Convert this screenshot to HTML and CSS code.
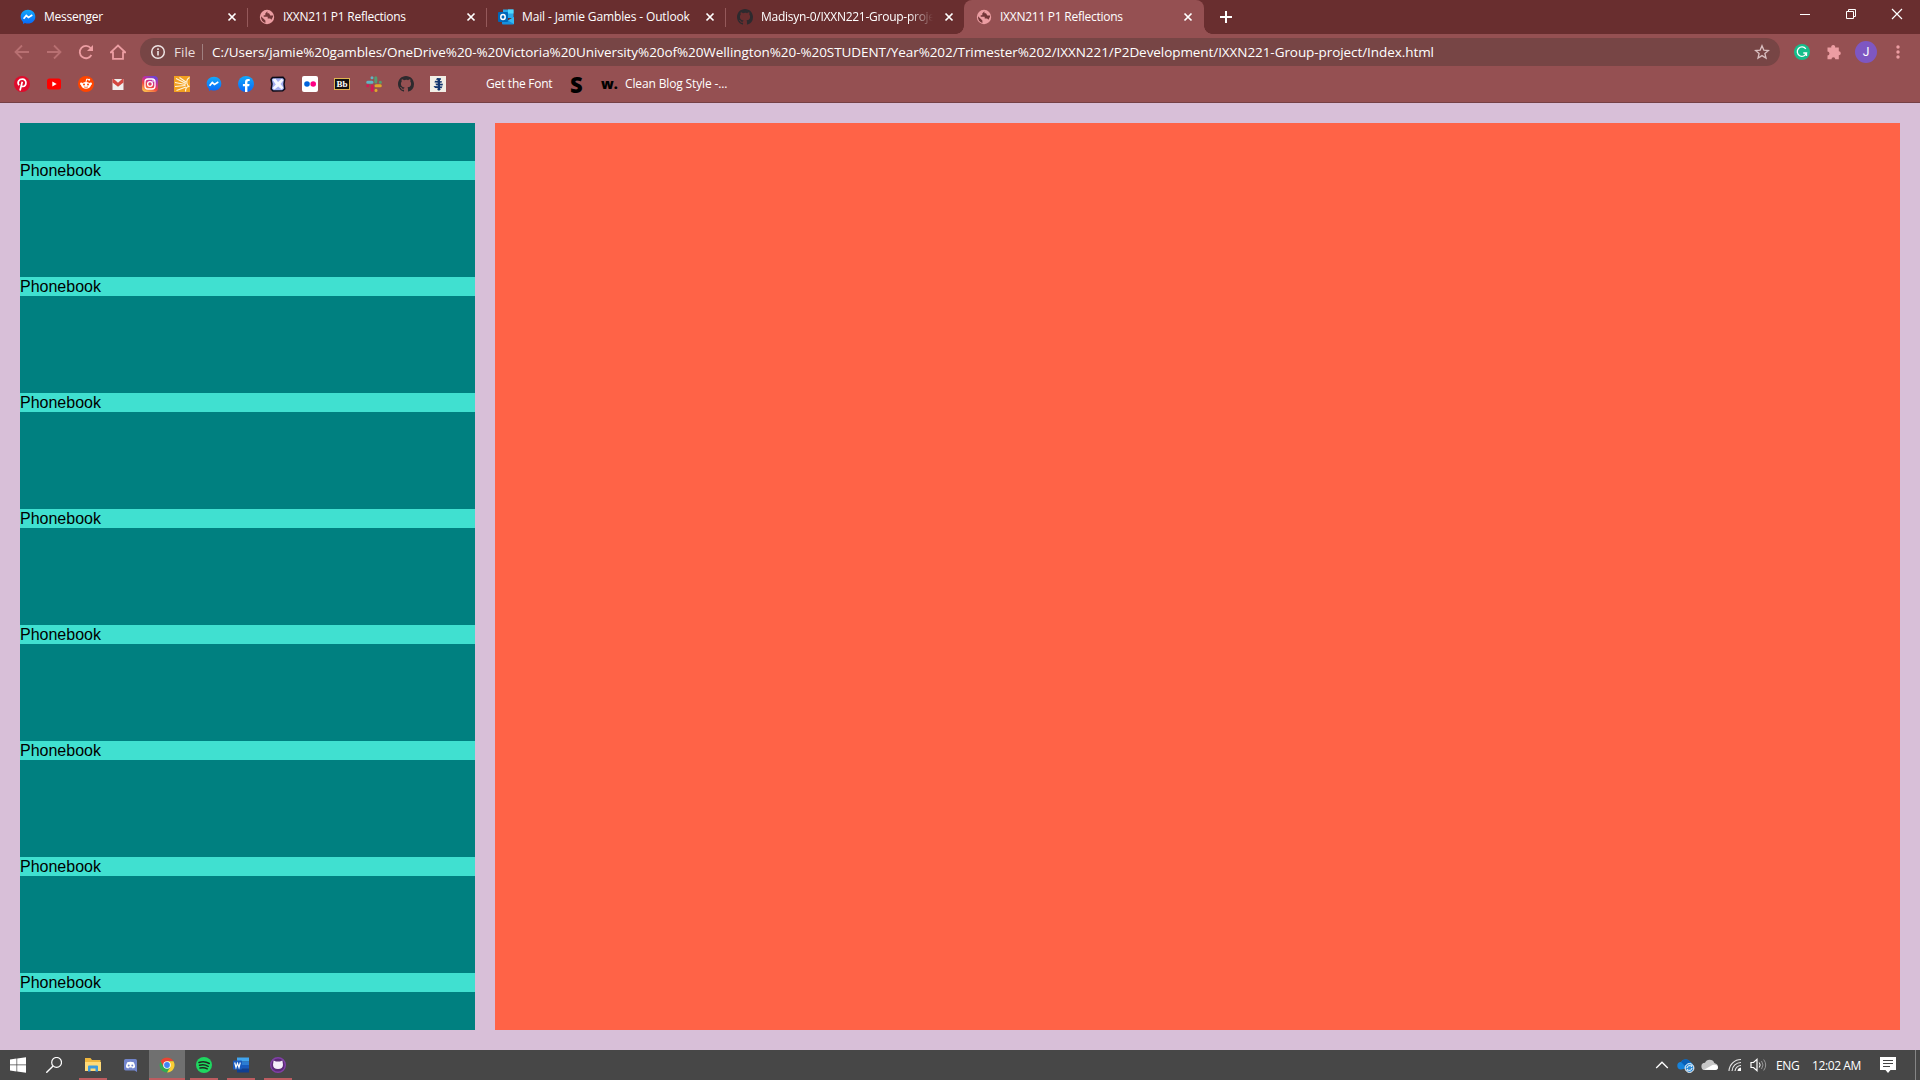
FILE: index.html
```html
<!DOCTYPE html>
<html lang="en">
<head>
<meta charset="utf-8">
<title>IXXN211 P1 Reflections</title>
<link rel="stylesheet" href="styles.css">
</head>
<body>
<svg class="defs" width="0" height="0" aria-hidden="true">
  <defs>
    <linearGradient id="blue" x1="0" y1="0" x2="0" y2="1"><stop offset="0" stop-color="#13a9fb"/><stop offset="1" stop-color="#0868f8"/></linearGradient>
    <linearGradient id="insta" x1="0.2" y1="1" x2="0.7" y2="0"><stop offset="0" stop-color="#ffc64c"/><stop offset=".4" stop-color="#f0453f"/><stop offset=".7" stop-color="#c52fa0"/><stop offset="1" stop-color="#6a45d8"/></linearGradient>
    <symbol id="close" viewBox="0 0 16 16"><path d="M4.5 4.5l7 7m0-7l-7 7" stroke="#fff" stroke-width="1.7" fill="none"/></symbol>
    <symbol id="messenger" viewBox="0 0 16 16"><path d="M8 .8C3.7.8.7 3.9.7 7.8c0 2.1.8 3.8 2.3 5.1v2l2-.9c.9.4 1.9.6 3 .6 4.300 0 7.300-2.900 7.300-6.800S12.300.8 8 .8z" fill="url(#blue)"/><path d="M3.600 9.800l2.700-3.300 2.200 1.900 3.800-2.300" fill="none" stroke="#fff" stroke-width="1.700"/></symbol>
    <symbol id="globe" viewBox="0 0 16 16"><circle cx="8" cy="8" r="7.200" fill="#ec9da2"/><path d="M8.400 2.200L6.300 4.500v1.700H4.700v1.500h4v1.800h2.500l1.200 1.300 1.600-3 .100-1.200h-2.800L10 4.200h-1.600zM2 7.300l4.400 4.200v2.400C3.600 13.300 1.800 10.800 2 7.300z" fill="#733638"/></symbol>
    <symbol id="github" viewBox="0 0 16 16"><path fill="#2d2a2e" d="M8 0C3.580 0 0 3.580 0 8c0 3.540 2.290 6.530 5.470 7.590.4.070.55-.17.55-.38 0-.19-.01-.82-.01-1.490-2.010.37-2.530-.49-2.690-.94-.09-.23-.48-.94-.82-1.130-.28-.15-.68-.52-.01-.53.63-.01 1.080.58 1.230.82.72 1.210 1.870.87 2.330.66.07-.52.28-.87.51-1.070-1.780-.2-3.640-.89-3.640-3.950 0-.87.31-1.590.82-2.150-.08-.2-.36-1.020.08-2.120 0 0 .67-.21 2.200.82A7.600 7.600 0 018 3.860c.68 0 1.360.09 2 .27 1.530-1.040 2.200-.82 2.200-.82.44 1.100.16 1.920.08 2.120.51.56.82 1.270.82 2.150 0 3.070-1.870 3.750-3.650 3.950.29.25.54.73.54 1.480 0 1.070-.01 1.930-.01 2.200 0 .21.15.46.55.38A8.010 8.010 0 0016 8c0-4.420-3.580-8-8-8z"/></symbol>
  </defs>
</svg>

<header class="browser">
  <div class="tabstrip">
    <div class="tab"><svg class="ico"><use href="#messenger"/></svg><span class="tab-title">Messenger</span><svg class="ico"><use href="#close"/></svg></div>
    <div class="tab divided"><svg class="ico"><use href="#globe"/></svg><span class="tab-title">IXXN211 P1 Reflections</span><svg class="ico"><use href="#close"/></svg></div>
    <div class="tab divided"><svg class="ico" viewBox="0 0 16 16"><path d="M5 .5h10.500V9H5z" fill="#28a8ea"/><path d="M10 .5h5.500v4H10z" fill="#50d9ff"/><path d="M5 4.500h5V9H5z" fill="#0364b8"/><path d="M4 9l6 2.500L16 8v6.500q0 1-1 1H5q-1 0-1-1z" fill="#1490df"/><path d="M10 11.500L16 8v7z" fill="#35b8f1"/><rect y="3" width="10" height="10" rx="1" fill="#0067b8"/><ellipse cx="5" cy="8" rx="2.200" ry="2.500" fill="none" stroke="#fff" stroke-width="1.500"/></svg><span class="tab-title wide">Mail - Jamie Gambles - Outlook</span><svg class="ico"><use href="#close"/></svg></div>
    <div class="tab divided"><svg class="ico"><use href="#github"/></svg><span class="tab-title fade">Madisyn-0/IXXN221-Group-proje</span><svg class="ico"><use href="#close"/></svg></div>
    <div class="tab active"><svg class="ico"><use href="#globe"/></svg><span class="tab-title">IXXN211 P1 Reflections</span><svg class="ico"><use href="#close"/></svg></div>
    <svg class="newtab" viewBox="0 0 16 16"><path d="M8 2v12M2 8h12" stroke="#fff" stroke-width="2"/></svg>
    <div class="window-controls">
      <svg viewBox="0 0 46 28"><path d="M18 14.500h10" stroke="#fff"/></svg>
      <svg viewBox="0 0 46 28"><path d="M18.500 11.500h7v7h-7zM20.500 11.500v-2h7v7h-2" stroke="#fff" fill="none"/></svg>
      <svg viewBox="0 0 46 28"><path d="M18 9l10 10M28 9L18 19" stroke="#fff" stroke-width="1.200"/></svg>
    </div>
  </div>

  <div class="toolbar">
    <div class="nav">
      <svg class="ico dim" viewBox="0 0 16 16"><path d="M15 8H2M8 1.500L1.500 8 8 14.500" /></svg>
      <svg class="ico dim" viewBox="0 0 16 16"><path d="M1 8h13M8 1.500L14.500 8 8 14.500"/></svg>
      <svg class="ico" viewBox="0 0 16 16"><path d="M13.400 11A6.200 6.200 0 1 1 12.700 4"/><path d="M15 1v6H9z" fill="#ec9da2" stroke="none"/></svg>
      <svg class="ico" viewBox="0 0 16 16"><path d="M.7 8.300L8 1.500l7.300 6.800H13v6.500H3V8.300z"/></svg>
    </div>
    <div class="omnibox">
      <svg class="ico" viewBox="0 0 16 16"><circle cx="8" cy="8" r="6.300" fill="none" stroke="#eee4e4" stroke-width="1.500"/><path d="M8 7v4.500M8 4.300v1.600" stroke="#eee4e4" stroke-width="1.600"/></svg>
      <span class="scheme">File</span>
      <span class="url">C:/Users/jamie%20gambles/OneDrive%20-%20Victoria%20University%20of%20Wellington%20-%20STUDENT/Year%202/Trimester%202/IXXN221/P2Development/IXXN221-Group-project/Index.html</span>
      <svg class="ico star" viewBox="0 0 16 16"><path d="M8 1.800l1.800 4.300 4.700.4-3.600 3 1.100 4.600L8 11.600l-4 2.500 1.100-4.600-3.600-3 4.700-.4z" fill="none" stroke="#d9bfc0" stroke-width="1.300"/></svg>
    </div>
    <div class="extensions">
      <svg class="ico" viewBox="0 0 16 16"><circle cx="8" cy="8" r="8" fill="#15bd8b"/><path d="M11.800 4.900A4.700 4.700 0 1 0 12.500 9H9.300m3.200 0v3" fill="none" stroke="#fff" stroke-width="1.300"/></svg>
      <svg class="ico" viewBox="0 0 16 16"><path d="M1.500 3.500h3.800a2 2 0 1 1 3.800 0h3.700v3.700a2 2 0 1 1 0 4v4H9.300a1.900 1.900 0 0 0-3.800 0h-4v-3.800a1.900 1.900 0 0 0 0-3.900z" fill="#ec9da2"/></svg>
      <span class="avatar">J</span>
      <svg class="ico" viewBox="0 0 16 16" fill="#ec9da2"><circle cx="8" cy="3" r="1.700"/><circle cx="8" cy="8" r="1.700"/><circle cx="8" cy="13" r="1.700"/></svg>
    </div>
  </div>

  <div class="bookmarks">
    <div class="bookmark-icons">
      <svg class="ico" viewBox="0 0 16 16"><circle cx="8" cy="8" r="8" fill="#e00b2c"/><path d="M5 9.300C2.700 6 5.200 3.200 8.300 3.200c5.200 0 4.300 7.300.6 7.300-1 0-1.500-.8-1.500-.8M8.300 5.700L6 14.500" fill="none" stroke="#fff" stroke-width="1.700"/></svg>
      <svg class="ico" viewBox="0 0 16 16"><rect x="1" y="2.500" width="14" height="11" rx="2.500" fill="#f00"/><path d="M6.300 5.500v5L10.700 8z" fill="#fff"/></svg>
      <svg class="ico" viewBox="0 0 16 16"><circle cx="8" cy="8" r="8" fill="#ff4500"/><ellipse cx="8" cy="9.300" rx="4.800" ry="3.400" fill="#fff"/><circle cx="3.300" cy="7.800" r="1.300" fill="#fff"/><circle cx="12.700" cy="7.800" r="1.300" fill="#fff"/><path d="M8 6l.7-3 2.400.6" fill="none" stroke="#fff"/><circle cx="11.200" cy="3.700" r="1" fill="#fff"/><circle cx="6" cy="8.600" r="1" fill="#ff4500"/><circle cx="10" cy="8.600" r="1" fill="#ff4500"/><path d="M6 10.900q2 1 4 0" stroke="#ff4500" stroke-width=".7" fill="none"/></svg>
      <svg class="ico" viewBox="0 0 16 16"><path d="M3 3h10v11H3z" fill="#eee"/><path d="M2.500 14V3h1.300L8 6.800 12.200 3h1.300v11z" fill="#f2eeee"/><path d="M2.500 6.500V3h1.300L8 6.800 12.200 3h1.300v3.500L8 10.800z" fill="#d44640"/></svg>
      <svg class="ico" viewBox="0 0 16 16"><rect width="16" height="16" rx="4" fill="url(#insta)"/><rect x="3" y="3" width="10" height="10" rx="3" fill="none" stroke="#fff" stroke-width="1.300"/><circle cx="8" cy="8" r="2.400" fill="none" stroke="#fff" stroke-width="1.300"/><circle cx="11" cy="5" r=".8" fill="#fff"/></svg>
      <svg class="ico" viewBox="0 0 16 16"><path d="M0 0h16v16H0z" fill="#f2a021"/><path d="M12 6L5.500 1.500M12 7.500L2 2.500M11.500 8.500L1 6.500M11.500 9.500L1 10.500M12 11L2.500 14.500M15.500 1.500q-3.500 2-2.500 6 .5 2.500 2.500 3-4 0-4 5" stroke="#fff5df" stroke-width="1.100" fill="none"/></svg>
      <svg class="ico"><use href="#messenger"/></svg>
      <svg class="ico" viewBox="0 0 16 16"><circle cx="8" cy="8" r="8" fill="url(#blue)"/><path d="M7 16v-5.700H4.900V8H7V6.200q0-3.200 3-3.200l1.700.1v2h-1.100q-1.200 0-1.200 1.200V8h2.200l-.4 2.300H9.400V16z" fill="#fff"/></svg>
      <svg class="ico" viewBox="0 0 16 16"><path d="M2.500 1.500l10.500-.3 1.700 2-.7 4.800.7 5-2 1.800-9.700.2-1.800-2L2 8 1 3.500z" fill="#a3aef0" stroke="#0a0a18" stroke-width="1.500"/><path d="M2.500 3.500l3-.8L8 6l3.500-3.300 2 1.500L10.500 8l2.800 3.500-1.500 2L8.200 10.500 4.500 13.500l-2-1.500L5.800 8.500z" fill="#f5f7ff"/></svg>
      <svg class="ico" viewBox="0 0 16 16"><rect width="16" height="16" rx="2" fill="#fff"/><circle cx="5" cy="8" r="2.800" fill="#0063dc"/><circle cx="11.200" cy="8" r="2.800" fill="#ff0084"/></svg>
      <span class="bb">Bb</span>
      <svg class="ico" viewBox="0 0 16 16" stroke-width="3" stroke-linecap="round"><path d="M1.700 6.300H6M6 1.700v.1" stroke="#62b4c4"/><path d="M9.800 1.700V6M14.300 6.200h.1" stroke="#559b70"/><path d="M10 9.800h4.300M10 14.300v.1" stroke="#e2a62b"/><path d="M6.200 10v4.300M1.700 9.800h.1" stroke="#d31b55"/></svg>
      <svg class="ico"><use href="#github"/></svg>
      <svg class="ico" viewBox="0 0 16 16"><path d="M0 0h16v16H0z" fill="#f2efe6"/><path d="M7 2l4 .3-.3 1.700L6 3.700zM5 4.800l7 .4-.5 1.600-7-.3zM5.500 7.500l7.500.3-.5 1.700-6.500-.2zM3.500 10l9 .6-1 1.600-6.500-.3zM7 12.800l4 .2-1.500 1.600H8z" fill="#12366e"/><path d="M7.500 3h2.500v11H8z" fill="#12366e"/></svg>
    </div>
    <span class="bm-text font-link">Get the Font</span>
    <span class="bm-s">S</span>
    <span class="bm-w">w.</span>
    <span class="bm-text blog-link">Clean Blog Style -...</span>
  </div>
</header>

<main class="page">
  <section class="sidebar">
    <div class="entry">Phonebook</div>
    <div class="entry">Phonebook</div>
    <div class="entry">Phonebook</div>
    <div class="entry">Phonebook</div>
    <div class="entry">Phonebook</div>
    <div class="entry">Phonebook</div>
    <div class="entry">Phonebook</div>
    <div class="entry">Phonebook</div>
  </section>
  <section class="content"></section>
</main>

<footer class="taskbar">
  <div class="apps">
    <span class="app start"><svg class="ico" viewBox="0 0 16 16" fill="#fff"><path d="M0 2.400l6.500-.9v6H0zM7.200 1.400L16 .2v7.300H7.200zM0 8.300h6.500v6.100L0 13.500zM7.200 8.300H16v7.500l-8.800-1.200z"/></svg></span>
    <span class="app search"><svg class="ico" viewBox="0 0 16 16"><circle cx="10.600" cy="5.400" r="4.900" fill="none" stroke="#fff" stroke-width="1.200"/><path d="M7.100 9L.3 15.700" stroke="#fff" stroke-width="1.400"/></svg></span>
    <span class="app open"><svg class="ico" viewBox="0 0 16 16"><path d="M0 1h5.500L7 3h8.500v11H0z" fill="#f0b73e"/><path d="M0 5h16v9H0z" fill="#ffda78"/><path d="M3 14.500V9.500q0-1 1-1h8q1 0 1 1v5h-2.500V11.500h-5v3z" fill="#3e9bdd"/></svg></span>
    <span class="app"><svg class="ico small" viewBox="0 0 16 16"><path d="M2 0h12q2 0 2 2v14l-3-2H2q-2 0-2-2V2q0-2 2-2z" fill="#7285cc"/><path d="M4 4q4-1.500 8 0 1.700 3 1.600 6.200-1.400 1.200-3 1.400L10 10.500H6l-.6 1.100q-1.600-.2-3-1.400Q2.300 7 4 4z" fill="#fff"/><circle cx="5.800" cy="8" r="1.200" fill="#7285cc"/><circle cx="10.200" cy="8" r="1.200" fill="#7285cc"/></svg></span>
    <span class="app open current"><svg class="ico" viewBox="0 0 16 16"><circle cx="8" cy="8" r="7.500" fill="#34a853"/><path d="M1.500 4.250A7.500 7.500 0 0 1 14.500 4.250H8L4.800 9.900z" fill="#ea4335"/><path d="M14.500 4.250A7.500 7.500 0 0 1 8 15.500l3.300-5.600L8 4.250z" fill="#fbcc34"/><circle cx="8" cy="8" r="3.800" fill="#fff"/><circle cx="8" cy="8" r="2.900" fill="#4285f4"/></svg></span>
    <span class="app open"><svg class="ico" viewBox="0 0 16 16"><circle cx="8" cy="8" r="8" fill="#1ed760"/><path d="M3 5.500q5.500-1.700 10.300 1M3.500 8.300q4.500-1.300 8.700 1M4 11q4-1 7.300.8" fill="none" stroke="#202820" stroke-width="1.500" stroke-linecap="round"/></svg></span>
    <span class="app open"><svg class="ico" viewBox="0 0 16 16"><path d="M4 .5h12v4H4z" fill="#41a5ee"/><path d="M4 4.300h12V8H4z" fill="#2b7cd3"/><path d="M4 8h12v3.800H4z" fill="#185abd"/><path d="M4 11.700h12v3.800H4z" fill="#103f91"/><rect y="3.500" width="9" height="9" rx=".8" fill="#185abd"/><path d="M1.700 5.500L3 10.500l1.500-4.300L6 10.500l1.300-5" fill="none" stroke="#fff" stroke-width="1.200"/></svg></span>
    <span class="app open"><svg class="ico" viewBox="0 0 16 16"><circle cx="8" cy="8" r="7.300" fill="#5b2a78" stroke="#8240a8" stroke-width="1.400"/><path d="M3.600 3.500l2.400 1h4l2.400-1 .6 4.200q-.2 4.300-5 4.300t-5-4.300z" fill="#f5eefa"/></svg></span>
  </div>
  <div class="tray">
    <svg class="t-up" viewBox="0 0 14 16"><path d="M1.200 11L7 5.200l5.800 5.800" fill="none" stroke="#fff" stroke-width="1.300"/></svg>
    <svg class="t-drive" viewBox="0 0 18 16"><path d="M4 12.500a3.700 3.700 0 0 1 0-7.400A5.300 5.300 0 0 1 13.400 5q3.100 1.500 3.100 5z" fill="#1683dc"/><path d="M4 5.100A5.300 5.300 0 0 1 13.400 5L8 9z" fill="#0a5fb5"/><circle cx="12.500" cy="11" r="4.400" fill="#2b8cdb" stroke="#fff"/><path d="M10 11a2.600 2.600 0 0 1 4.700-1.300V8.200M15 11a2.600 2.600 0 0 1-4.700 1.300v1.500" fill="none" stroke="#fff"/></svg>
    <svg class="t-cloud" viewBox="0 0 18 16"><path d="M4 13a3.600 3.600 0 0 1 0-7.200 5 5 0 0 1 9.300.2Q17 7 17 10q0 3-3 3z" fill="#c8c8c8"/><path d="M3 12.800L11.500 8q5-1 5.500 2.300 0 2.700-3 2.700z" fill="#fff"/></svg>
    <svg class="t-wifi" viewBox="0 0 14 16"><g fill="none" stroke="#e8e8e8" stroke-width="1.100"><path d="M1 14A12 12 0 0 1 13 2.500M4 14a9 9 0 0 1 9-8.500M7 14a6 6 0 0 1 6-5.500"/></g><path d="M9.500 14q0-3 3.500-3.500V14z" fill="#fff"/></svg>
    <svg class="t-vol" viewBox="0 0 17 16"><path d="M1 5.500h2.500L7 2.300v11.400l-3.500-3.200H1z" fill="none" stroke="#fff" stroke-width="1.200"/><path d="M9.300 5.500q1.700 2.500 0 5" fill="none" stroke="#fff"/><path d="M11.500 4q3 4 0 8M13.700 2.500q4 5.500 0 11" fill="none" stroke="#9a9a9a"/></svg>
    <span class="lang">ENG</span>
    <span class="clock">12:02 AM</span>
    <svg class="t-note" viewBox="0 0 16 16"><path d="M0 0h16v13h-5.500L8 16l-2.500-3H0z" fill="#fff"/><path d="M3 3.500h10M3 6.500h10M3 9.500h7" stroke="#444"/></svg>
  </div>
</footer>
</body>
</html>
```
FILE: styles.css
```css
* { box-sizing: border-box; }

body {
  margin: 0;
  width: 1920px;
  height: 1080px;
  overflow: hidden;
  display: flex;
  flex-direction: column;
  background: thistle;
  font-family: "Open Sans", "Noto Sans", sans-serif;
  color: #fff;
}

svg { display: block; flex: none; }
.defs { position: absolute; }
.ico { width: 16px; height: 16px; flex: none; }

/* Browser chrome */
.browser {
  height: 103px;
  flex: none;
  background: #955052;
  border-bottom: 1px solid #754045;
}

.tabstrip {
  height: 34px;
  display: flex;
  align-items: center;
  padding-left: 8px;
  background: #692e2f;
}
.tab {
  position: relative;
  width: 239px;
  height: 34px;
  display: flex;
  align-items: center;
  gap: 8px;
  padding: 0 7px 0 12px;
}
.tab-title {
  flex: 1;
  min-width: 0;
  overflow: hidden;
  white-space: nowrap;
  font-size: 12px;
  line-height: 18px;
  letter-spacing: -0.26px;
}
.wide { letter-spacing: -0.13px; }
.fade {
  -webkit-mask-image: linear-gradient(to right, #000 86%, transparent);
  mask-image: linear-gradient(to right, #000 86%, transparent);
}
.divided::before {
  content: "";
  position: absolute;
  left: 0;
  top: 8px;
  width: 1px;
  height: 19px;
  background: #95595a;
}
.active {
  width: 240px;
  padding-right: 8px;
  background: #955052;
  border-radius: 8px 8px 0 0;
}
.active::before,
.active::after {
  content: "";
  position: absolute;
  bottom: 0;
  width: 8px;
  height: 8px;
}
.active::before { left: -8px; background: radial-gradient(circle at 0 0, transparent 7.5px, #955052 8px); }
.active::after { right: -8px; background: radial-gradient(circle at 100% 0, transparent 7.5px, #955052 8px); }
.newtab { width: 16px; height: 16px; margin-left: 14px; }
.window-controls { display: flex; margin: 0 0 6px auto; }
.window-controls svg { width: 46px; height: 28px; }

.toolbar { height: 36px; display: flex; align-items: center; }
.nav { width: 140px; display: flex; gap: 16px; padding-left: 14px; }
.nav path { fill: none; stroke: #ec9da2; stroke-width: 1.8; }
.nav .dim path { stroke: #b87072; }
.nav path[stroke="none"] { fill: #ec9da2; stroke: none; }
.omnibox {
  width: 1640px;
  height: 28px;
  display: flex;
  align-items: center;
  padding: 0 10px;
  border-radius: 14px;
  background: #774545;
  font-size: 13.5px;
  line-height: 20px;
  white-space: nowrap;
}
.scheme {
  width: 29px;
  height: 16px;
  margin-left: 8px;
  line-height: 16px;
  border-right: 1px solid #a08080;
  color: #e9dcdc;
}
.url { margin-left: 9px; letter-spacing: -0.07px; }
.star { margin-left: auto; }
.extensions { display: flex; align-items: center; padding-left: 14px; }
.extensions .ico + .ico { margin-left: 16px; }
.avatar {
  width: 22px;
  height: 22px;
  margin: 0 13px;
  border-radius: 50%;
  background: #7e57c2;
  font: 12px/22px Roboto, sans-serif;
  text-align: center;
}

.bookmarks { height: 28px; display: flex; align-items: center; padding-left: 14px; white-space: nowrap; }
.bookmark-icons { width: 472px; display: flex; gap: 16px; }
.bb {
  width: 16px;
  height: 12px;
  margin-top: 2px;
  border: 1px solid #e0b450;
  background: #111;
  font: bold 9px/10px "Liberation Serif", serif;
  text-align: center;
}
.bm-text { font-size: 12px; line-height: 18px; letter-spacing: -0.25px; }
.font-link { width: 83px; }
.blog-link { letter-spacing: -0.14px; }
.bm-s { width: 32px; padding-left: 1px; color: #000; font: 800 22px/20px "Open Sans", sans-serif; }
.bm-w { width: 24px; color: #000; font: 800 14px/18px "Open Sans", sans-serif; }

/* Page */
.page { flex: 1; display: flex; gap: 20px; padding: 20px; }
.sidebar {
  width: 455px;
  display: flex;
  flex-direction: column;
  justify-content: space-between;
  padding: 38px 0;
  background: teal;
}
.entry {
  height: 19px;
  background: turquoise;
  color: #000;
  font: 16px/19px "Liberation Sans", Arial, sans-serif;
}
.content { flex: 1; background: tomato; }

/* Taskbar */
.taskbar {
  height: 30px;
  flex: none;
  display: flex;
  justify-content: space-between;
  background: #474747;
}
.apps { display: flex; gap: 1px; }
.app {
  width: 36px;
  height: 30px;
  display: flex;
  align-items: center;
  justify-content: center;
  background-repeat: no-repeat;
  background-position: bottom;
  background-size: 28px 2px;
}
.search { margin-right: 2px; }
.start { margin-right: -1px; }
.open { background-image: linear-gradient(#bd5c60, #bd5c60); }
.current { background-color: #707070; background-size: 36px 2px; }
.small { width: 13px; height: 13px; }
.tray {
  display: flex;
  align-items: center;
  width: 265px;
  margin-right: 4px;
  border-right: 1px solid #858585;
  font-size: 12px;
  letter-spacing: -0.4px;
  white-space: nowrap;
}
.t-up { width: 14px; height: 16px; margin-left: 4px; }
.t-drive { width: 18px; height: 16px; margin-left: 8px; }
.t-cloud { width: 18px; height: 16px; margin-left: 6px; }
.t-wifi { width: 14px; height: 16px; margin-left: 9px; }
.t-vol { width: 17px; height: 16px; margin-left: 8px; }
.lang { width: 36px; margin-left: 9px; }
.clock { width: 68px; }
.t-note { width: 16px; height: 16px; }
```
